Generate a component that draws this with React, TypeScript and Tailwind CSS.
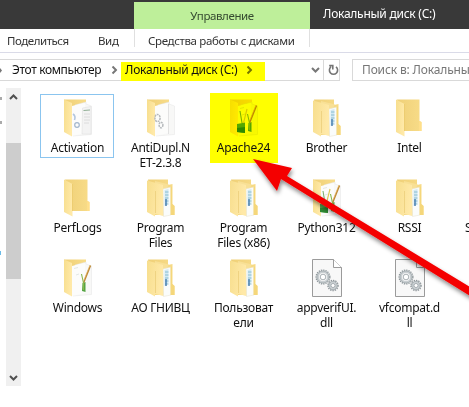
import React from "react";

type Kind = "docs" | "gears" | "pens" | "strip" | "plain" | "windows" | "dll";

function Gear({ x, y, r }: { x: number; y: number; r: number }) {
  return (
    <g transform={`translate(${x} ${y})`} fill="none">
      <circle r={r} stroke="#8f979b" strokeWidth="1.7" strokeDasharray="1.35 .9" />
      <circle r={r - 1.5} stroke="#c9cfd2" strokeWidth="2.4" />
      <circle r={r - 0.7} stroke="#8d969b" strokeWidth=".5" />
      <circle r={r / 2.4} fill="#fff" stroke="#879197" strokeWidth=".7" />
    </g>
  );
}

function FileIcon({ kind }: { kind: Kind }) {
  if (kind === "dll") {
    return (
      <svg width="30" height="38" viewBox="0 0 30 38">
        <path d="M.5.5H21.5L29.5 8.5V37.5H.5Z" fill="#f8f8f8" stroke="#9b9b9b" />
        <path d="M21.5.5V8.5H29.5" fill="#fff" stroke="#9b9b9b" />
        <Gear x={11} y={18} r={6.7} />
        <Gear x={21} y={26.5} r={4.9} />
      </svg>
    );
  }
  const open = kind === "docs" || kind === "gears" || kind === "pens" || kind === "windows";
  return (
    <svg width="30" height="38" viewBox="0 0 30 38">
      <defs>
        <linearGradient id="front" x1="0" x2="1" y2=".3">
          <stop stopColor="#f7de8d" />
          <stop offset="1" stopColor="#ffe9a8" />
        </linearGradient>
        <linearGradient id="back" x1="0" x2="1">
          <stop stopColor="#efd078" />
          <stop offset="1" stopColor="#f8dc88" />
        </linearGradient>
      </defs>
      {open && (
        <>
          <path d="M1 .5H23V30L9 35Z" fill="url(#back)" />
          <path d="M12 6L23 3V5L28.5 7V35.5L10 37Z" fill="#f8f8f7" stroke="#e4e4e4" strokeWidth=".5" />
          <path d="M9 7L22 4V34L9 37Z" fill="#fcfcfb" />
          <path d="M1 .5L9 4V37.5L1 33Z" fill="url(#front)" />
        </>
      )}
      {kind === "docs" && (
        <>
          <path d="M19.5 9L28 7.5V35H19Z" fill="#f3f3f3" stroke="#ddd" strokeWidth=".5" />
          <path d="M20.5 11.5L27 11" stroke="#8fae94" strokeWidth="1" />
          <path d="M21 15H27M21 18H27M21 21H27M21 24H26" stroke="#dcdcdc" />
          <path d="M10 15Q13 17 11.5 21" fill="none" stroke="#b3c6de" strokeWidth="1.6" />
          <circle cx="14" cy="26" r="2.3" fill="none" stroke="#a3b6cc" strokeWidth="1.2" />
        </>
      )}
      {kind === "gears" && (
        <>
          <path d="M22.5 5V35" stroke="#e2e2e2" />
          <g fill="none" stroke="#b5b9bc" strokeWidth="1.5" strokeDasharray="2 .7">
            <ellipse cx="11.5" cy="19" rx="2.6" ry="3.6" />
            <ellipse cx="15" cy="26" rx="1.9" ry="2.8" />
          </g>
        </>
      )}
      {(kind === "pens" || kind === "windows") && (
        <>
          {kind === "pens" && (
            <>
              <path d="M8 25L16 23.5V34L8 33Z" fill="#55a84e" />
              <path d="M8 29L16 28V34L8 33Z" fill="#2e8a34" />
              <path d="M11 12L13 24" stroke="#7eb070" strokeWidth="1.1" />
              <path d="M18 10L14.5 24" stroke="#dbc956" strokeWidth="1.2" />
            </>
          )}
          <path d="M19.5 24L22.5 23V33L19 32Z" fill="#54a443" />
          <path d="M27.5 6.5L20.5 24" stroke="#b98634" strokeWidth="1.5" />
          <path d="M27 6L21 21" stroke="#edb45b" strokeWidth=".6" />
          <path d="M18.5 15L20.5 24V31" fill="none" stroke="#88b64a" strokeWidth="1.1" />
          <path d="M11 9.5L15 8.5M13 16L16 15" stroke="#e3e8e5" />
        </>
      )}
      {kind === "strip" && (
        <>
          <path d="M2 .5L22 .5V6L26.5 5V25L28.5 27V36H7Z" fill="url(#back)" />
          <path d="M9 2L23 5.5L19 12V37L8 35Z" fill="#f8e096" />
          <path d="M17 10L25 8V36L17.5 37.5Z" fill="#fafcfb" stroke="#e7e2cf" strokeWidth=".5" />
          <path d="M18.5 11L22.5 10V24L18.5 27Z" fill="#d3e9f1" />
          <path d="M19 13H22.5M19 16H22.5M19 19H22.5M19 22H22.5M19 25H22.5" stroke="#8abdd2" strokeWidth="1" />
          <path d="M20 20V27" stroke="#4d80b0" strokeWidth="1.5" />
          <path d="M1 1.5L17 6V36.5L9 35V37.5L1 33Z" fill="url(#front)" />
          <path d="M9.5 12V34" stroke="#efd382" />
          <path d="M24.5 8L26 7.5V25L28.5 27V36H24.5Z" fill="#f5d77b" />
        </>
      )}
      {kind === "plain" && (
        <>
          <path d="M2 .5H24.5V22L26.5 23V32H9Z" fill="url(#back)" />
          <path d="M1 .5L9.5 5V37.5L1 33Z" fill="url(#front)" />
          <path d="M9.5 5V32" stroke="#e8c663" strokeWidth=".7" />
          <path d="M24 22L26.5 23V32H24Z" fill="#ffdf8a" />
        </>
      )}
    </svg>
  );
}

const entries: { name: string; kind: Kind }[] = [
  { name: "Activation", kind: "docs" },
  { name: "AntiDupl.N\nET-2.3.8", kind: "gears" },
  { name: "Apache24", kind: "pens" },
  { name: "Brother", kind: "strip" },
  { name: "Intel", kind: "plain" },
  { name: "PerfLogs", kind: "plain" },
  { name: "Program\nFiles", kind: "strip" },
  { name: "Program\nFiles (x86)", kind: "strip" },
  { name: "Python312", kind: "pens" },
  { name: "RSSI", kind: "strip" },
  { name: "Windows", kind: "windows" },
  { name: "АО ГНИВЦ", kind: "strip" },
  { name: "Пользоват\nели", kind: "strip" },
  { name: "appverifUI.\ndll", kind: "dll" },
  { name: "vfcompat.d\nll", kind: "dll" },
];

function Entry({ name, kind, index }: { name: string; kind: Kind; index: number }) {
  return (
    <div className="relative flex h-20 flex-col items-center">
      {index === 0 && <div className="absolute left-[4px] top-0 h-[64px] w-[74px] border border-[#8bc5ef]" />}
      {index === 2 && <div className="absolute left-[8px] -top-px h-[70px] w-[68px] bg-[#ffff00]" />}
      <div className={index === 2 ? "mt-[5px] h-[38px] mix-blend-multiply" : "relative mt-[5px] h-[38px]"}>
        <FileIcon kind={kind} />
      </div>
      <div className="relative mt-[3px] whitespace-pre text-center text-[12px] leading-[15px] tracking-[-0.25px]">{name}</div>
    </div>
  );
}

function Chevron({ className }: { className?: string }) {
  return (
    <svg className={className} width="9" height="6" viewBox="0 0 9 6">
      <path d="M1 1L4.5 4.5L8 1" fill="none" stroke="currentColor" strokeWidth="2" />
    </svg>
  );
}

export default function App() {
  return (
    <div className="relative h-[407px] w-[469px] overflow-hidden bg-white font-['Noto_Sans',sans-serif] text-[12px] leading-[16px] tracking-[-0.25px] text-[#111]">
      <header className="flex h-[29px] bg-[#393939]">
        <div className="ml-[134px] mt-[2px] flex h-[27px] w-[176px] items-center justify-center bg-[#beef9a] text-[11.5px] tracking-[-0.4px] text-[#354a30]">Управление</div>
        <div className="ml-[13px] whitespace-nowrap pt-[6px] text-[12px] text-white">Локальный диск (C:)</div>
      </header>
      <nav className="flex h-6 border-b border-[#dadbe8] text-[11.5px] tracking-[-0.35px] text-[#333]">
        <div className="w-[98px] pl-[7px] pt-[4px] tracking-[-0.45px]">Поделиться</div>
        <div className="w-[36px] pt-[4px]">Вид</div>
        <div className="h-[18px] w-[176px] whitespace-nowrap border-x border-[#e0e0e0] pl-[13px] pt-[4px]">Средства работы с дисками</div>
      </nav>
      <div className="flex h-[28px] whitespace-nowrap pt-[6px]">
        <div className="flex h-[22px] w-[342px] border-y border-r border-[#d9d9d9]">
          <svg className="mt-[7px] shrink-0" width="12" height="7"><path d="M0 1L2 3.5L0 6" fill="#777" /></svg>
          <div className="w-[98px] pt-[2px] tracking-[-0.35px]">Этот компьютер</div>
          <div className="w-[11px] pt-[7px]"><Chevron className="-rotate-90 text-[#777]" /></div>
          <div className="mt-[2px] flex h-[19px] w-[144px] bg-[#ffff00] pl-[4px]">
            <div className="w-[120px]">Локальный диск (C:)</div>
            <Chevron className="mt-[5px] -rotate-90 text-[#747400]" />
          </div>
          <div className="flex w-[59px] items-center justify-end border-r border-[#d9d9d9] pr-[3px]"><Chevron className="text-[#777]" /></div>
          <svg className="ml-[4px] mt-[4px] shrink-0" width="11" height="13" viewBox="0 0 11 13">
            <path d="M8 2.9A4.1 4.1 0 1 1 3 2.9M5.6 1.6H1.2M4.8 1.2V5.4" fill="none" stroke="#757575" strokeWidth="1.6" />
          </svg>
        </div>
        <div className="ml-[12px] h-[22px] w-[120px] border border-[#d9d9d9] pl-[9px] pt-[2px] tracking-[-0.15px] text-[#777]">Поиск в: Локальный диск (C:)</div>
      </div>
      <main className="flex">
        <aside className="relative flex h-[306px] w-[36px] shrink-0 flex-col pl-[6px] pt-[7px]">
          <div className="absolute left-0 top-[16px] h-[3px] w-[2px] bg-[#aaa]" />
          <div className="absolute left-0 top-[40px] h-[3px] w-[2px] bg-[#aaa]" />
          <div className="absolute left-0 top-[170px] h-[4px] w-px bg-[#6bbbe7]" />
          <div className="flex h-[298px] w-[15px] flex-col items-center bg-[#f0f0f0]">
            <Chevron className="mt-[6px] rotate-180 text-[#505050]" />
            <div className="mt-[43px] h-[136px] w-full bg-[#cdcdcd]" />
            <Chevron className="mt-[96px] text-[#505050]" />
          </div>
        </aside>
        <section className="relative grid h-[300px] w-[415px] shrink-0 grid-cols-5 content-start pt-[13px]">
          {entries.map((entry, i) => <Entry key={i} {...entry} index={i} />)}
          <div className="absolute left-[429px] top-[139px] leading-[15px]">S</div>
        </section>
      </main>
      <svg className="absolute inset-0" width="469" height="407">
        <defs>
          <filter id="shade" x="-10%" y="-10%" width="120%" height="130%">
            <feDropShadow dx="1" dy="3" stdDeviation="2" floodColor="#000" floodOpacity=".45" />
          </filter>
        </defs>
        <path d="M253 159L292 168L287 176L475 290V299L281 179L277 191Z" fill="#f40000" filter="url(#shade)" />
      </svg>
    </div>
  );
}
